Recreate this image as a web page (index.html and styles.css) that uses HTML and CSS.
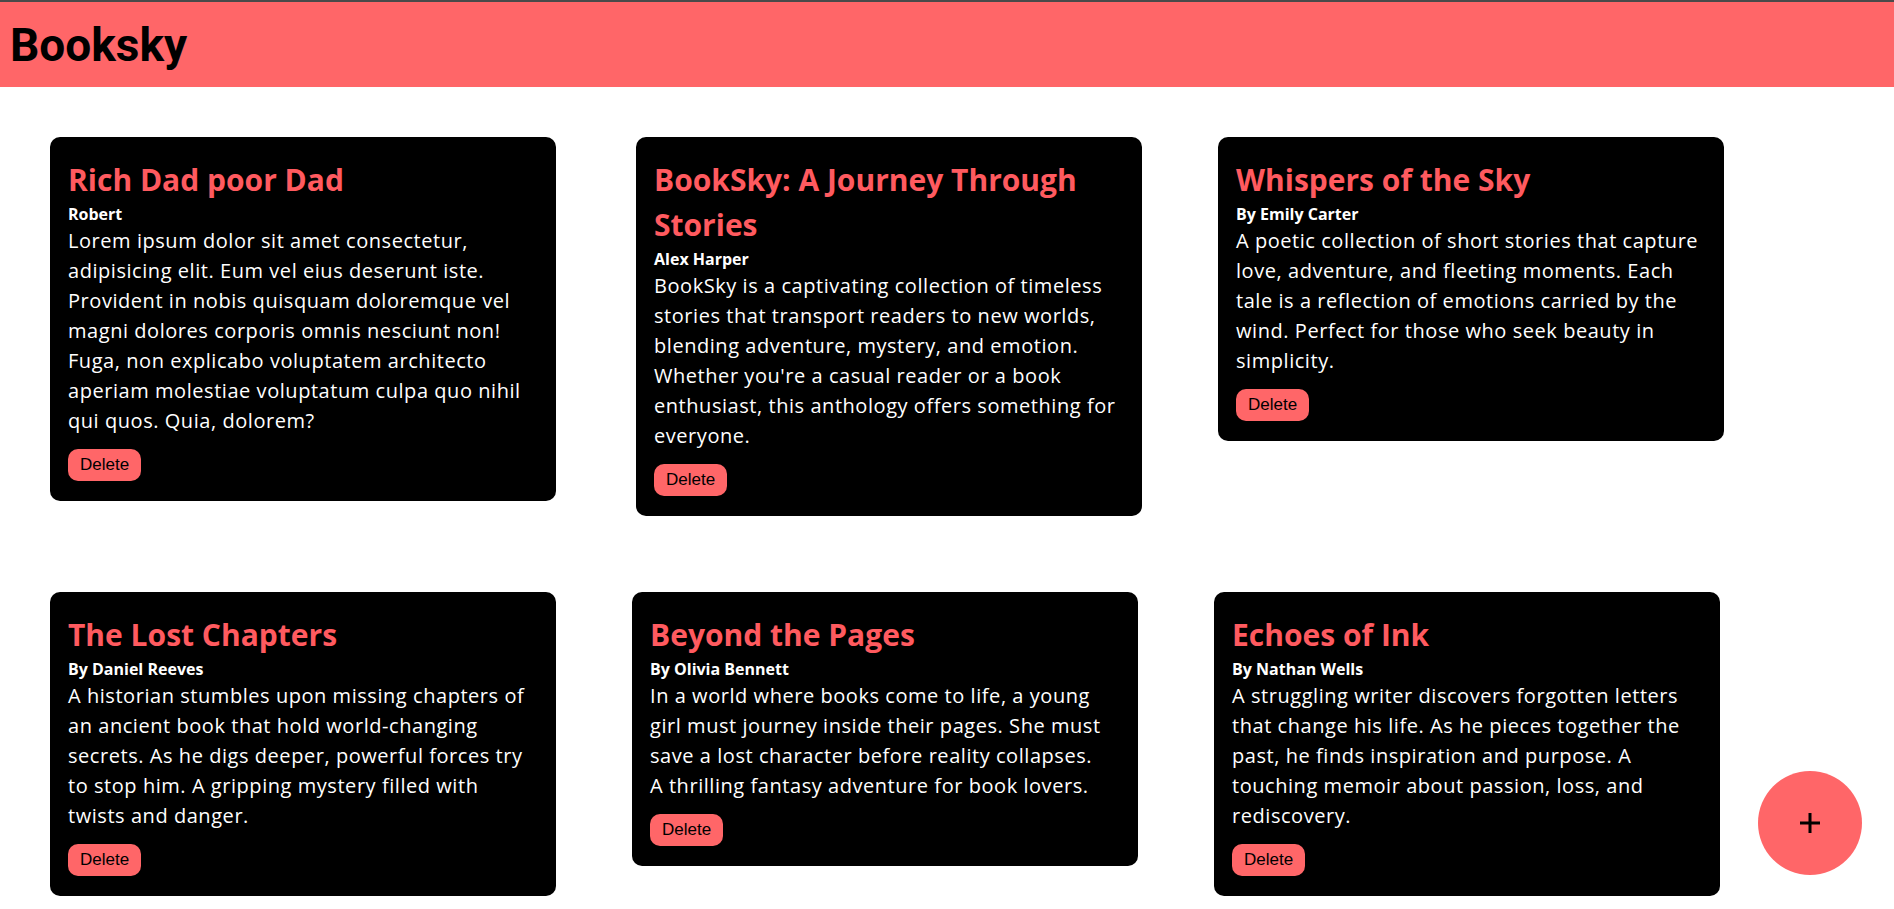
FILE: index.html
```html
<!DOCTYPE html>
<html lang="en">
<head>
<meta charset="utf-8">
<title>Booksky</title>
<link rel="stylesheet" href="styles.css">
</head>
<body>
<header class="topbar">
  <h1 class="brand">Booksky</h1>
</header>
<main class="book-grid">
  <article class="card">
    <h2 class="card-title">Rich Dad poor Dad</h2>
    <h5 class="card-author">Robert</h5>
    <p class="card-desc">Lorem ipsum dolor sit amet consectetur, adipisicing elit. Eum vel eius deserunt iste. Provident in nobis quisquam doloremque vel magni dolores corporis omnis nesciunt non! Fuga, non explicabo voluptatem architecto aperiam molestiae voluptatum culpa quo nihil qui quos. Quia, dolorem?</p>
    <button class="delete-btn">Delete</button>
  </article>
  <article class="card card--nudge">
    <h2 class="card-title">BookSky: A Journey Through Stories</h2>
    <h5 class="card-author">Alex Harper</h5>
    <p class="card-desc">BookSky is a captivating collection of timeless stories that transport readers to new worlds, blending adventure, mystery, and emotion. Whether you're a casual reader or a book enthusiast, this anthology offers something for everyone.</p>
    <button class="delete-btn">Delete</button>
  </article>
  <article class="card">
    <h2 class="card-title">Whispers of the Sky</h2>
    <h5 class="card-author">By Emily Carter</h5>
    <p class="card-desc">A poetic collection of short stories that capture love, adventure, and fleeting moments. Each tale is a reflection of emotions carried by the wind. Perfect for those who seek beauty in simplicity.</p>
    <button class="delete-btn">Delete</button>
  </article>
  <article class="card">
    <h2 class="card-title">The Lost Chapters</h2>
    <h5 class="card-author">By Daniel Reeves</h5>
    <p class="card-desc">A historian stumbles upon missing chapters of an ancient book that hold world-changing secrets. As he digs deeper, powerful forces try to stop him. A gripping mystery filled with twists and danger.</p>
    <button class="delete-btn">Delete</button>
  </article>
  <article class="card">
    <h2 class="card-title">Beyond the Pages</h2>
    <h5 class="card-author">By Olivia Bennett</h5>
    <p class="card-desc">In a world where books come to life, a young girl must journey inside their pages. She must save a lost character before reality collapses.<br>A thrilling fantasy adventure for book lovers.</p>
    <button class="delete-btn">Delete</button>
  </article>
  <article class="card">
    <h2 class="card-title">Echoes of Ink</h2>
    <h5 class="card-author">By Nathan Wells</h5>
    <p class="card-desc">A struggling writer discovers forgotten letters that change his life. As he pieces together the past, he finds inspiration and purpose. A touching memoir about passion, loss, and rediscovery.</p>
    <button class="delete-btn">Delete</button>
  </article>
</main>
<button class="fab" aria-label="Add book">
  <svg width="24" height="24" viewBox="0 0 24 24" aria-hidden="true">
    <path d="M12 2v20M2 12h20" stroke="#000" stroke-width="3" fill="none"/>
  </svg>
</button>
</body>
</html>
```
FILE: styles.css
```css
* { box-sizing: border-box; }

body {
  margin: 0;
  background: #ffffff;
  font-family: "Open Sans", "Noto Sans", sans-serif;
}

.topbar {
  border-top: 2px solid #4a4a4a;
  height: 87px;
  background: #ff6668;
  display: flex;
  align-items: center;
  padding: 0 10px;
}

.brand {
  margin: 0;
  font-family: Roboto, "Liberation Sans", sans-serif;
  font-weight: 700;
  font-size: 46px;
  color: #000;
}

.book-grid {
  display: flex;
  flex-wrap: wrap;
  align-items: flex-start;
  gap: 76px;
  padding: 50px 0 40px 50px;
}

.card {
  width: 506px;
  background: #000;
  border-radius: 10px;
  padding: 20px 18px;
  color: #fff;
}

.card--nudge { margin-left: 4px; }

.card-title {
  margin: 0;
  font-size: 30px;
  line-height: 45px;
  font-weight: 700;
  color: #ff5a5f;
}

.card-author {
  margin: 0;
  font-size: 16px;
  line-height: 24px;
  font-weight: 700;
}

.card-desc {
  margin: 0;
  font-size: 20px;
  line-height: 30px;
  letter-spacing: 0.55px;
}

.delete-btn {
  display: block;
  margin-top: 13px;
  height: 32px;
  padding: 0 12px;
  border: none;
  border-radius: 10px;
  background: #ff6668;
  color: #000;
  font-family: "Liberation Sans", Arial, sans-serif;
  font-size: 17px;
}

.fab {
  position: fixed;
  right: 32px;
  bottom: 34px;
  width: 104px;
  height: 104px;
  border: none;
  border-radius: 50%;
  background: #ff6668;
  display: flex;
  align-items: center;
  justify-content: center;
  padding: 0;
}
```
